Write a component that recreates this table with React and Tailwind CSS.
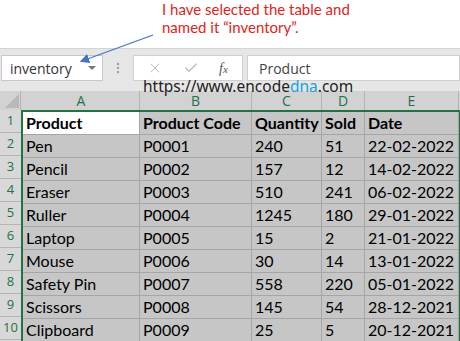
import { X, Check, EllipsisVertical } from "lucide-react";

const cols = [
  { letter: "A", w: "w-[117px]" },
  { letter: "B", w: "w-[112px]" },
  { letter: "C", w: "w-[70px]" },
  { letter: "D", w: "w-[43px]" },
  { letter: "E", w: "w-[94px]" },
];

const header = ["Product", "Product Code", "Quantity", "Sold", "Date"];

const rows = [
  ["Pen", "P0001", "240", "51", "22-02-2022"],
  ["Pencil", "P0002", "157", "12", "14-02-2022"],
  ["Eraser", "P0003", "510", "241", "06-02-2022"],
  ["Ruller", "P0004", "1245", "180", "29-01-2022"],
  ["Laptop", "P0005", "15", "2", "21-01-2022"],
  ["Mouse", "P0006", "30", "14", "13-01-2022"],
  ["Safety Pin", "P0007", "558", "220", "05-01-2022"],
  ["Scissors", "P0008", "145", "54", "28-12-2021"],
  ["Clipboard", "P0009", "25", "5", "20-12-2021"],
];

function Cell({ value, w, bold, active }) {
  return (
    <div
      className={`${w} h-[23px] shrink-0 border-r border-b border-[#a6a6a6] px-[3px] flex items-end pb-[1px] text-[16px] leading-[20px] text-black ${
        active ? "bg-white" : "bg-[#c6c6c6]"
      } ${bold ? "font-bold" : ""}`}
    >
      <span className="whitespace-nowrap">{value}</span>
    </div>
  );
}

export default function App() {
  return (
    <div className="relative w-[460px] h-[341px] overflow-hidden bg-white font-['Lato','Noto_Sans',sans-serif]">
      {/* note */}
      <div className="h-[48px] pl-[162px] text-[15px] leading-[18px] text-[#e0241c] font-['Lato',sans-serif]">
        <p>I have selected the table and</p>
        <p>named it “inventory”.</p>
      </div>

      {/* formula bar */}
      <div className="h-[43px] bg-[#e6e6e6] border-t border-[#d4d4d4] flex items-start pt-[6px]">
        <div className="ml-[1px] w-[102px] h-[26px] bg-white border border-[#c8c8c8] flex items-center justify-between pl-[8px] pr-[6px]">
          <span className="text-[14px] text-[#333] font-['Open_Sans',sans-serif]">inventory</span>
          <span className="w-0 h-0 border-l-[4px] border-r-[4px] border-t-[4px] border-l-transparent border-r-transparent border-t-[#777]" />
        </div>
        <div className="w-[30px] h-[26px] flex items-center justify-center">
          <EllipsisVertical className="h-[14px] w-[14px] text-[#9a9a9a]" strokeWidth={2} />
        </div>
        <div className="w-[110px] h-[26px] bg-white border border-[#d0d0d0] flex items-center pl-[13px] gap-[20px]">
          <X className="h-[16px] w-[16px] text-[#bdbdbd]" strokeWidth={1.5} />
          <Check className="h-[16px] w-[16px] text-[#bdbdbd]" strokeWidth={2} />
          <span className="font-['Liberation_Serif',serif] italic text-[14px] text-[#555]">
            f<span className="text-[11px]">x</span>
          </span>
        </div>
        <div className="ml-[4px] flex-1 h-[26px] bg-white border border-[#d0d0d0] flex items-center pl-[11px]">
          <span className="text-[14px] text-[#444] font-['Open_Sans',sans-serif]">Product</span>
        </div>
      </div>

      {/* column headers */}
      <div className="h-[19px] flex bg-[#d2d2d2]">
        <div className="w-[21px] h-[19px] shrink-0 border-r border-[#b4b4b4] relative">
          <svg className="absolute left-[5px] top-[3px]" width="14" height="14" viewBox="0 0 14 14">
            <polygon points="14,0 14,14 0,14" fill="#b8b8b8" />
          </svg>
        </div>
        <div className="w-[2px] shrink-0" />
        {cols.map((c) => (
          <div
            key={c.letter}
            className={`${c.w} h-[19px] shrink-0 border-r border-[#b4b4b4] flex items-center justify-center text-[14px] text-[#217346] font-['Open_Sans',sans-serif]`}
          >
            {c.letter}
          </div>
        ))}
      </div>

      {/* grid */}
      <div className="flex">
        <div className="w-[21px] shrink-0 bg-[#d8d8d8]">
          {Array.from({ length: 10 }, (_, i) => (
            <div
              key={i}
              className="h-[23px] border-b border-[#b4b4b4] flex items-center justify-center text-[13px] text-[#217346] font-['Open_Sans',sans-serif]"
            >
              {i + 1}
            </div>
          ))}
        </div>
        <div className="border-2 border-[#217346] -mr-[2px]">
          <div className="flex">
            {header.map((h, j) => (
              <Cell key={h} value={h} w={cols[j].w} bold active={j === 0} />
            ))}
          </div>
          {rows.map((r, i) => (
            <div key={i} className="flex">
              {r.map((v, j) => (
                <Cell key={j} value={v} w={cols[j].w} />
              ))}
            </div>
          ))}
        </div>
      </div>

      {/* watermark */}
      <div className="absolute left-[143px] top-[77px] text-[15.5px] leading-[18px] text-[#222] font-['Noto_Sans',sans-serif]">
        https://www.encode<span className="text-[#1ba1e2]">dna</span>.com
      </div>

      {/* arrow */}
      <svg className="absolute left-0 top-0" width="460" height="120" viewBox="0 0 460 120">
        <defs>
          <marker id="ah" markerWidth="8" markerHeight="8" refX="6" refY="4" orient="auto">
            <polygon points="0,0 8,4 0,8" fill="#4472c4" />
          </marker>
        </defs>
        <line x1="153" y1="35" x2="82" y2="61" stroke="#4472c4" strokeWidth="1.2" markerEnd="url(#ah)" />
      </svg>
    </div>
  );
}
